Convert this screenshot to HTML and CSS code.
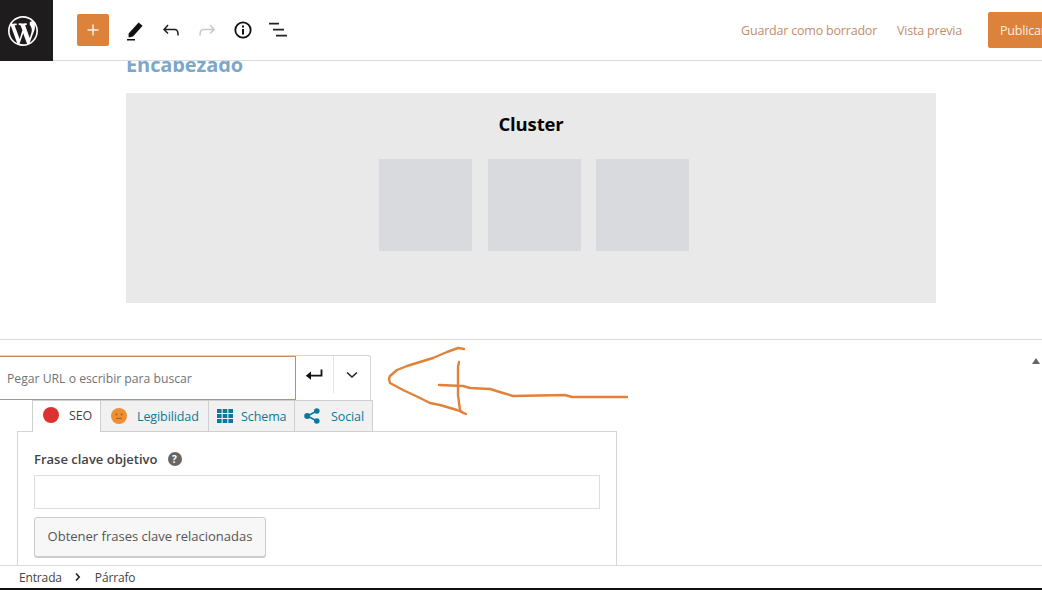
FILE: index.html
```html
<!DOCTYPE html>
<html lang="es">
<head>
<meta charset="utf-8">
<title>Editor</title>
<link rel="stylesheet" href="styles.css">
</head>
<body>
<div class="app">
  <header class="topbar">
    <div class="wp-logo">
      <svg viewBox="0 0 20 20" width="30" height="30"><path fill="#fff" d="M20 10c0-5.51-4.49-10-10-10C4.48 0 0 4.49 0 10c0 5.52 4.48 10 10 10 5.51 0 10-4.48 10-10zM7.78 15.37L4.37 6.22c.55-.02 1.17-.08 1.17-.08.5-.06.44-1.13-.06-1.11 0 0-1.45.11-2.37.11-.18 0-.37 0-.58-.01C4.12 2.69 6.87 1.11 10 1.11c2.33 0 4.45.87 6.05 2.34-.68-.11-1.65.39-1.65 1.58 0 .74.45 1.36.9 2.1.35.61.55 1.36.55 2.46 0 1.49-1.4 5-1.4 5l-3.03-8.37c.54-.02.82-.17.82-.17.5-.05.44-1.25-.06-1.22 0 0-1.44.12-2.38.12-.87 0-2.33-.12-2.33-.12-.5-.03-.56 1.2-.06 1.22l.92.08 1.26 3.41zM17.41 10c.24-.64.74-1.87.43-4.25.7 1.29 1.05 2.71 1.05 4.25 0 3.29-1.73 6.24-4.4 7.78.97-2.59 1.94-5.2 2.92-7.78zM6.1 18.09C3.12 16.65 1.11 13.53 1.11 10c0-1.3.23-2.48.72-3.59C3.25 10.3 4.67 14.2 6.1 18.09zm4.03-6.63l2.58 6.98c-.86.29-1.76.45-2.71.45-.79 0-1.57-.11-2.29-.33.81-2.38 1.62-4.74 2.42-7.1z"/></svg>
    </div>
    <div class="tools">
      <button class="add-btn" type="button" aria-label="Añadir bloque">
        <svg viewBox="0 0 14 14" width="14" height="14"><path d="M7 1.5v11M1.5 7h11" stroke="#fbeee4" stroke-width="1.5" fill="none"/></svg>
      </button>
      <svg class="tool tool-pencil" viewBox="0 0 20 24" width="20" height="24"><path fill="#111" d="M3.6 15.6 13.6 4.6 17.6 7.8 8 18.6 3.6 19.6zM2 21h8v1.6H2z"/></svg>
      <svg class="tool tool-undo" viewBox="0 0 24 24" width="24" height="24"><path fill="#1e1e1e" d="M18.3 11.7c-.6-.6-1.4-.9-2.3-.9H6.7l2.9-3.3-1.1-1-4.5 5L8.5 16l1-1-2.7-2.7H16c.5 0 .9.2 1.3.5 1 1 1 3.4 1 4.5v.3h1.5v-.2c0-1.5 0-4.3-1.5-5.7z"/></svg>
      <svg class="tool tool-redo" viewBox="0 0 24 24" width="24" height="24"><path fill="#c9c9c9" d="M15.6 6.5l-1.1 1 2.9 3.3H8c-.9 0-1.7.3-2.3.9-1.4 1.5-1.4 4.2-1.4 5.6v.2h1.5v-.3c0-1.1 0-3.5 1-4.5.3-.3.7-.5 1.3-.5h9.2L14.5 15l1.1 1.1 4.6-4.6-4.6-5z"/></svg>
      <svg class="tool tool-info" viewBox="0 0 20 20" width="20" height="20"><circle cx="10" cy="10" r="7.7" fill="none" stroke="#111" stroke-width="1.8"/><path fill="#111" d="M9 9h2v5.6H9zM9 5.6h2v2H9z"/></svg>
      <svg class="tool tool-list" viewBox="0 0 20 16" width="20" height="16"><path stroke="#222" stroke-width="1.8" fill="none" d="M0 1.6h10M4 7.6h11M7 13.6h11"/></svg>
    </div>
    <div class="actions">
      <a class="action-link link-save">Guardar como borrador</a>
      <a class="action-link link-preview">Vista previa</a>
      <button class="publish" type="button">Publicar</button>
    </div>
  </header>

  <section class="editor">
    <h2 class="heading">Encabezado</h2>
    <div class="cluster">
      <h3 class="cluster-title">Cluster</h3>
      <div class="cluster-grid">
        <div class="cluster-item"></div>
        <div class="cluster-item"></div>
        <div class="cluster-item"></div>
      </div>
    </div>
  </section>

  <section class="meta">
    <div class="url-row">
      <div class="url-box">
        <div class="url-input">Pegar URL o escribir para buscar</div>
        <div class="url-btn url-enter">
          <svg viewBox="0 0 18 14" width="18" height="14"><path fill="none" stroke="#111" stroke-width="1.8" d="M16.5 1.5v6.2H3"/><path fill="#111" d="M6 3.4v8.4L.8 7.7z"/></svg>
        </div>
        <div class="url-btn url-more">
          <svg viewBox="0 0 12 8" width="12" height="8"><path fill="none" stroke="#222" stroke-width="1.6" d="M1 1.5l5 4.5 5-4.5"/></svg>
        </div>
      </div>
      <div class="collapse"></div>
    </div>

    <div class="tabs">
      <div class="tab tab-seo active"><span class="dot dot-red"></span><span class="tab-label">SEO</span></div>
      <div class="tab tab-read">
        <svg viewBox="0 0 16 16" width="16" height="16"><circle cx="8" cy="8" r="8" fill="#ee8f33"/><circle cx="5.4" cy="6.4" r="1" fill="#a8641f"/><circle cx="10.6" cy="6.4" r="1" fill="#a8641f"/><path d="M5 10.4h6" stroke="#a8641f" stroke-width="1.1"/></svg>
        <span class="tab-label">Legibilidad</span>
      </div>
      <div class="tab tab-schema">
        <svg viewBox="0 0 16 14" width="16" height="14"><path fill="#0a7a9c" d="M0 0h4.6v4H0zM5.7 0h4.6v4H5.7zM11.4 0H16v4h-4.6zM0 5h4.6v4H0zM5.7 5h4.6v4H5.7zM11.4 5H16v4h-4.6zM0 10h4.6v4H0zM5.7 10h4.6v4H5.7zM11.4 10H16v4h-4.6z"/></svg>
        <span class="tab-label">Schema</span>
      </div>
      <div class="tab tab-social">
        <svg viewBox="0 0 16 16" width="16" height="16"><path d="M12.8 3 3.4 8l9.4 5" fill="none" stroke="#0a7a9c" stroke-width="1.6"/><circle cx="12.8" cy="3" r="2.8" fill="#0a7a9c"/><circle cx="3.2" cy="8" r="3" fill="#0a7a9c"/><circle cx="12.8" cy="13" r="2.8" fill="#0a7a9c"/></svg>
        <span class="tab-label">Social</span>
      </div>
    </div>

    <div class="panel">
      <div class="field-label">
        <span>Frase clave objetivo</span>
        <span class="help">?</span>
      </div>
      <div class="text-field"></div>
      <button class="related" type="button">Obtener frases clave relacionadas</button>
    </div>
  </section>

  <footer class="crumbs">
    <span>Entrada</span>
    <svg viewBox="0 0 6 10" width="6" height="10"><path d="M1 1.5l3.2 3.5L1 8.5" fill="none" stroke="#222" stroke-width="1.6"/></svg>
    <span>Párrafo</span>
  </footer>

  <svg class="scribble" viewBox="0 0 1042 590" width="1042" height="590" aria-hidden="true">
    <g fill="none" stroke="#e0823c" stroke-width="2.4" stroke-linecap="round" stroke-linejoin="round">
      <path d="M464 349 458 348 447 352 433 358 407 366 397 370 390 376 389 379 390 383 403 390 418 397 430 403 440 405 457 410 466 414"/>
      <path d="M459 362 458 367 458 395 460 410 463 413"/>
      <path d="M439 385 463 386 470 388 490 389 503 393 513 396 565 395 572 397 627 397"/>
    </g>
  </svg>
</div>
</body>
</html>
```
FILE: styles.css
```css
* { box-sizing: border-box; }
html, body { margin: 0; padding: 0; height: 100%; overflow: hidden; }
body { background: #fff; font-family: "Open Sans", "Noto Sans", sans-serif; color: #444; }
.app { position: relative; display: flex; flex-direction: column; width: 1042px; height: 590px; overflow: hidden; }

/* Top bar */
.topbar { display: flex; align-items: center; height: 61px; flex: none; border-bottom: 1px solid #dcdcdc; background: #fff; }
.wp-logo { display: flex; align-items: center; justify-content: flex-start; width: 53px; height: 61px; padding-left: 8px; background: #1e1c1c; flex: none; margin-bottom: -1px; }
.tools { display: flex; align-items: center; padding-left: 24px; }
.add-btn { display: flex; align-items: center; justify-content: center; width: 32px; height: 32px; padding: 0; border: 0; border-radius: 2px; background: #dd823b; }
.tool { display: block; flex: none; }
.tool-pencil { margin-left: 16px; }
.tool-undo { margin-left: 14px; }
.tool-redo { margin-left: 12px; }
.tool-info { margin-left: 14px; }
.tool-list { margin-left: 16px; }
.actions { display: flex; align-items: center; margin-left: auto; margin-right: -18px; }
.action-link { font-size: 12.5px; letter-spacing: -.2px; color: #c48d69; }
.link-preview { margin-left: 20px; margin-right: 0; }
.link-save { margin-right: 0; }
.publish { margin-left: 26px; width: 72px; height: 36px; padding: 0 0 0 12px; border: 0; border-radius: 2px; background: #dd823b; color: #fbeee4; font: 12.5px "Open Sans", sans-serif; letter-spacing: -.2px; text-align: left; }

/* Editor canvas */
.editor { flex: none; height: 279px; border-bottom: 1px solid #dcdcdc; padding-left: 126px; overflow: hidden; }
.heading { margin: -12px 0 0; height: 44px; font-size: 20px; line-height: 32px; font-weight: 700; color: #7ba7cc; letter-spacing: -.1px; }
.cluster { width: 810px; height: 210px; background: #e9e9e9; padding-top: 17px; }
.cluster-title { margin: 0 0 22px; height: 27px; font-size: 18.5px; line-height: 27px; font-weight: 700; color: #050505; text-align: center; letter-spacing: -.15px; }
.cluster-grid { display: flex; gap: 15.5px; padding-left: 253px; }
.cluster-item { width: 93px; height: 92px; background: #d9dadd; }

/* Meta box area */
.meta { flex: 1; min-height: 0; overflow: hidden; }
.url-row { display: flex; justify-content: space-between; height: 60px; padding-top: 15px; }
.url-box { display: flex; width: 371px; height: 45px; border: 1px solid #d5d5d5; border-left: 0; border-bottom: 0; border-radius: 0 3px 0 0; }
.url-input { width: 296px; height: 44px; border: 1px solid #c98a5c; border-left: 0; display: flex; align-items: center; padding-left: 7px; font-size: 12.2px; color: #6f7478; }
.url-btn { display: flex; align-items: center; justify-content: center; height: 37px; }
.url-enter { width: 38px; padding-right: 2px; border-right: 1px solid #e4e4e4; }
.url-more { width: 36px; }
.collapse { width: 0; height: 0; margin: 3px 2px 0 0; border-left: 4px solid transparent; border-right: 4px solid transparent; border-bottom: 6px solid #666; }

.tabs { display: flex; height: 32px; padding-left: 32px; position: relative; z-index: 1; }
.tab { display: flex; align-items: center; height: 32px; border: 1px solid #cfcfcf; border-left: 0; background: #f1f1f1; font-size: 12.5px; letter-spacing: -.1px; color: #0a7a9c; }
.tab-seo { width: 69px; padding: 0 0 3px 10px; border-left: 1px solid #cfcfcf; border-bottom: 0; background: #fff; color: #444; }
.tab-read { width: 108px; padding-left: 10px; }
.tab-schema { width: 86px; padding-left: 8px; }
.tab-social { width: 78px; padding-left: 9px; }
.tab-seo .tab-label { margin-left: 10px; }
.tab-read .tab-label { margin-left: 10px; }
.tab-schema .tab-label { margin-left: 8px; }
.tab-social .tab-label { margin-left: 11px; }
.dot { display: block; width: 16px; height: 16px; border-radius: 50%; }
.dot-red { background: #dc3232; }

.panel { width: 600px; height: 140px; margin: -1px 0 0 17px; border: 1px solid #d5d5d5; border-bottom: 0; padding: 16px 16px 0; }
.field-label { display: flex; align-items: center; gap: 10px; height: 22px; font-size: 13px; font-weight: 600; color: #444; }
.help { display: flex; align-items: center; justify-content: center; width: 14px; height: 14px; border-radius: 50%; background: #666; color: #fff; font-size: 10px; font-weight: 700; line-height: 14px; }
.text-field { width: 566px; height: 34px; margin-top: 5px; border: 1px solid #ddd; background: #fff; }
.related { display: block; width: 232px; height: 40px; margin-top: 8px; padding: 0 0 2px; border: 1px solid #ccc; border-radius: 3px; background: #f7f7f7; box-shadow: 0 1px 0 #ccc; color: #555; font: 13px "Open Sans", sans-serif; }

/* Footer */
.crumbs { display: flex; align-items: center; flex: none; gap: 13.5px; height: 25px; padding: 0 0 0 19px; border-top: 1px solid #dcdcdc; border-bottom: 2px solid #111; background: #fff; font-size: 12px; letter-spacing: -.15px; color: #444; }

/* Hand-drawn annotation over the page */
.scribble { position: absolute; top: 0; left: 0; z-index: 2; pointer-events: none; }
```
